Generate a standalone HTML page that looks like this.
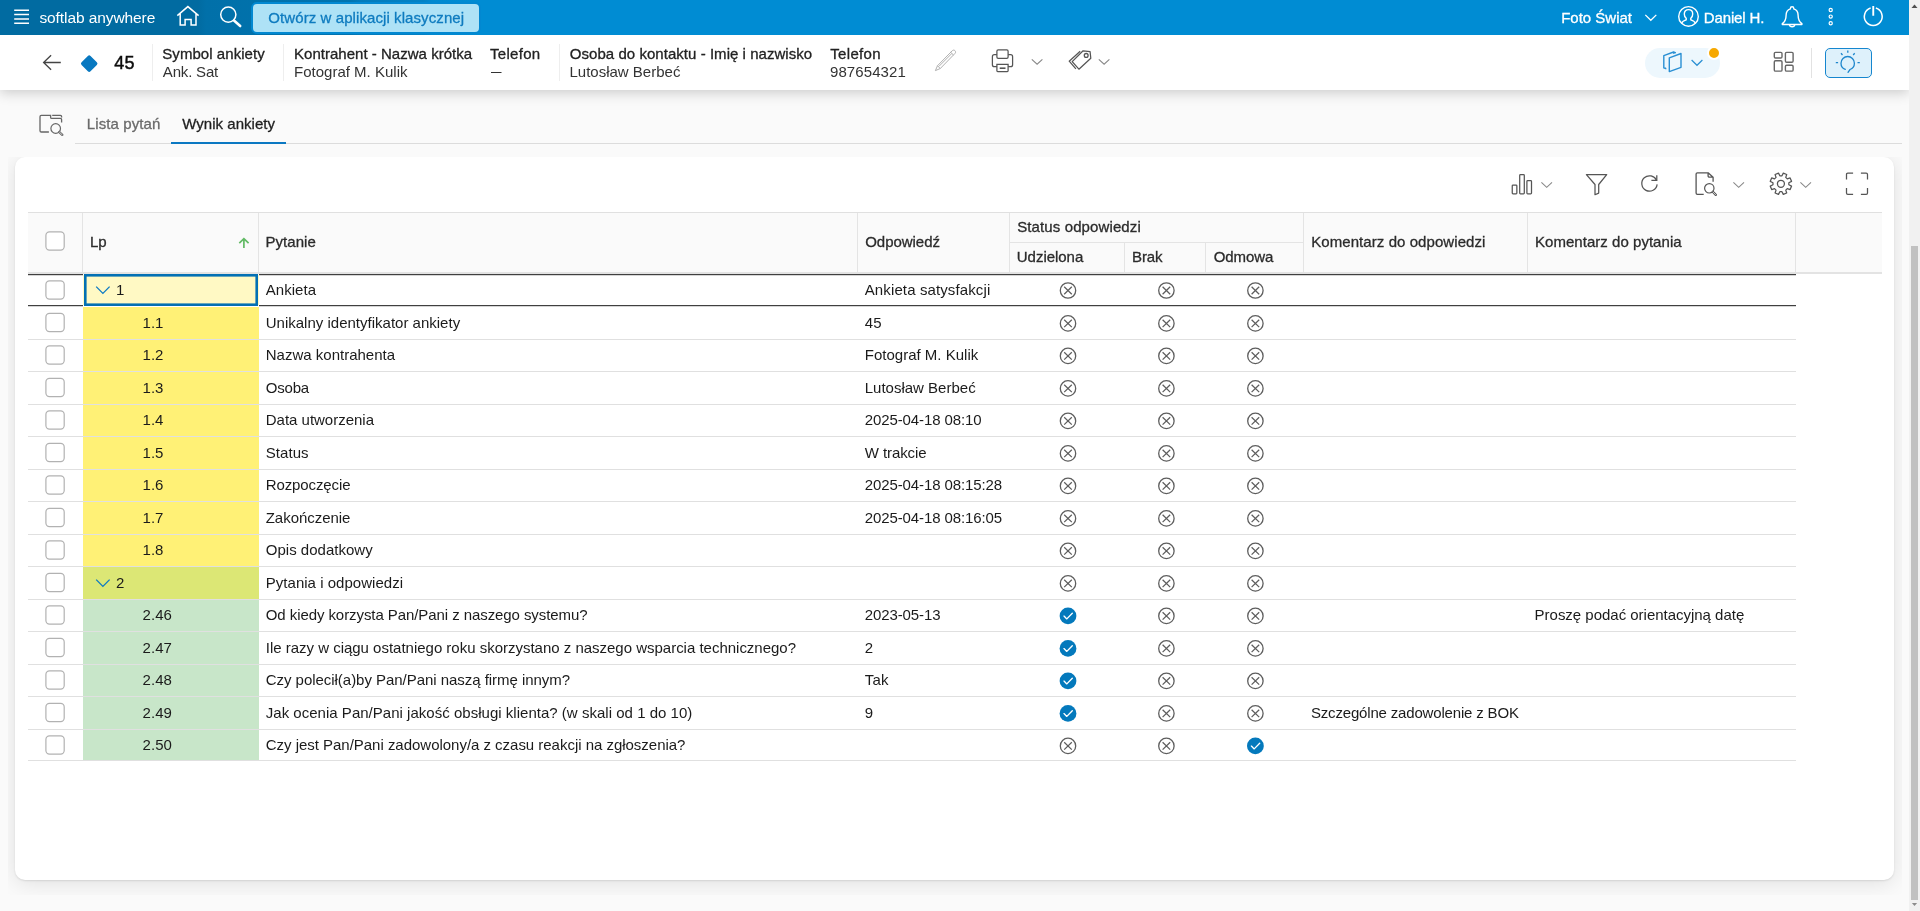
<!DOCTYPE html>
<html lang="pl">
<head>
<meta charset="utf-8">
<title>softlab anywhere - Wynik ankiety</title>
<style>
*{box-sizing:border-box;margin:0;padding:0}
html,body{width:1920px;height:911px;overflow:hidden;background:#fafafa}
body{position:relative;font-family:"Liberation Sans",sans-serif;font-size:15px;color:#212121}
.abs,.t,.ic,.lpbg,.rl,.cb,svg.i{position:absolute}
.t{white-space:pre;line-height:20px;font-weight:400}
#topbar{left:0;top:0;width:1909px;height:35px;background:linear-gradient(90deg,#016ba1 0,#016ba1 198px,#0170a9 206px,#0174af 350px,#027bbb 360px,#0282c5 424px,#0189cf 432px,#008cd3 480px,#008cd3 100%)}
#hdr{left:0;top:35px;width:1909px;height:55px;background:#fff;box-shadow:0 3px 12px rgba(0,0,0,.19);clip-path:inset(0 0 -40px 0)}
#sb{left:1909px;top:0;width:11px;height:911px;background:#f1f1f1}
#thumb{left:1911px;top:246px;width:7px;height:654px;background:#c1c1c1}
#btn{left:251px;top:2px;width:230px;height:32px;border-radius:6px;background:#aee2f6;border:2px solid #0288d1}
.vsep{width:1px;background:#eee;top:44px;height:37px}
#pill{left:1645px;top:48px;width:75px;height:30px;border-radius:15px;background:#edf7fd}
#dot{left:1707px;top:46px;width:14px;height:14px;border-radius:7px;background:#f6a800;border:2px solid #fff}
#bulb{left:1825px;top:48px;width:47px;height:30px;border-radius:5px;background:#def1fb;border:1.3px solid #1586cf}
#tabline{left:75px;top:143px;width:1827px;height:1px;background:#dcdcdc}
#tabsel{left:171px;top:142px;width:115px;height:2px;background:#0b78c2}
#clip{left:8px;top:157px;width:1894px;height:738px;overflow:hidden}
#card{left:7px;top:0;width:1879px;height:723px;background:#fff;border-radius:10px;box-shadow:0 3px 22px rgba(0,0,0,.11),0 1px 2px rgba(0,0,0,.10)}
#thead{left:28px;top:212px;width:1854px;height:62px;background:#fafafa;border-top:1px solid #e0e0e0;border-bottom:2px solid #e3e3e3}
.cs{width:1px;background:#e4e4e4;top:213px;height:59px}
.cs2{top:243px;height:29px}
#hmid{left:1009px;top:242px;width:294px;height:1px;background:#e4e4e4}
.rl{left:28px;width:1768px;height:1px;background:#e0e0e0}
.lpbg{left:83px;width:176px}
.dk{height:2px;background:linear-gradient(#404040 0,#404040 50%,rgba(64,64,64,.22) 50%,rgba(64,64,64,.22) 100%)}
.cb{left:45px;width:20px;height:20px;border:1.2px solid #b4b4b4;border-radius:4px;background:#fff}
#focus{left:84px;top:274px;width:174px;height:32px;border:2px solid #0b6db5;background:#fff9c4}
</style>
</head>
<body>
<!-- top bar -->
<div class="abs" id="topbar"></div>
<svg class="i" style="left:12px;top:6px" width="20" height="22" viewBox="0 0 20 22"><path d="M2.2 4.3h14.8M2.2 8.6h14.8M2.2 12.9h14.8M2.2 17.2h14.8" stroke="#fff" stroke-width="1.5" fill="none"/></svg>
<svg class="i" style="left:174px;top:3px" width="28" height="28" viewBox="0 0 28 28"><path d="M3.3 12.6L13.9 3.6 24.6 12.6M6.2 10.4V22h4.9v-5.6h6V22h4.9V10.4" stroke="#fff" stroke-width="1.5" fill="none" stroke-linejoin="miter"/></svg>
<svg class="i" style="left:216px;top:3px" width="30" height="28" viewBox="0 0 30 28"><circle cx="12.3" cy="11.6" r="7.6" stroke="#fff" stroke-width="1.5" fill="none"/><path d="M18 17.6l6.2 5.4" stroke="#fff" stroke-width="2.6" stroke-linecap="round" fill="none"/></svg>
<div class="abs" id="btn"></div>
<svg class="i" style="left:1642px;top:10px" width="18" height="14" viewBox="0 0 18 14"><path d="M3.3 4.9l5.5 5.4 5.5-5.4" stroke="#fff" stroke-width="1.3" fill="none"/></svg>
<svg class="i" style="left:1676px;top:4px" width="26" height="26" viewBox="0 0 26 26"><circle cx="12.5" cy="12.4" r="9.8" stroke="#fff" stroke-width="1.4" fill="none"/><path d="M5.6 19.4c.6-2.2 2.6-3 4.6-3.6v-1.5c-1.3-1-1.9-2.5-1.9-4.3 0-2.6 1.6-4.4 4.2-4.4s4.2 1.8 4.2 4.4c0 1.8-.6 3.300-1.900 4.300v1.500c2 .6 4 1.400 4.600 3.600" stroke="#fff" stroke-width="1.4" fill="none"/></svg>
<svg class="i" style="left:1778px;top:3px" width="28" height="28" viewBox="0 0 28 28"><path d="M14.100 3.800c1 0 1.700.7 1.700 1.600v.5c2.800.9 4.300 3.300 4.300 6.300 0 4.500 1.300 6.600 3.800 8.400v.9H4.300v-.9c2.500-1.800 3.800-3.900 3.800-8.400 0-3 1.500-5.400 4.300-6.300v-.5c0-.9.700-1.600 1.700-1.600zM11.300 21.500c.2 1.400 1.300 2.300 2.800 2.300s2.600-.9 2.800-2.300" stroke="#fff" stroke-width="1.4" fill="none" stroke-linejoin="round"/></svg>
<svg class="i" style="left:1824px;top:4px" width="14" height="26" viewBox="0 0 14 26"><circle cx="6.700" cy="6" r="1.600" stroke="#fff" stroke-width="1.200" fill="none"/><circle cx="6.700" cy="12.600" r="1.600" stroke="#fff" stroke-width="1.200" fill="none"/><circle cx="6.700" cy="19.300" r="1.600" stroke="#fff" stroke-width="1.200" fill="none"/></svg>
<svg class="i" style="left:1860px;top:3px" width="28" height="28" viewBox="0 0 28 28"><path d="M10.650 4.990A8.900 8.900 0 1 0 15.850 4.990" stroke="#fff" stroke-width="1.500" fill="none"/><path d="M13.250 3V12.750" stroke="#fff" stroke-width="1.900" fill="none"/></svg>

<!-- record header -->
<div class="abs" id="hdr"></div>
<svg class="i" style="left:40px;top:52px" width="24" height="22" viewBox="0 0 24 22"><path d="M20.800 10.500H3.600M11.100 3.200L3.600 10.500l7.500 7.300" stroke="#444" stroke-width="1.300" fill="none"/></svg>
<svg class="i" style="left:79px;top:53px" width="21" height="21" viewBox="0 0 21 21"><rect x="3.850" y="4.250" width="12.700" height="12.700" rx="1.900" transform="rotate(45 10.200 10.600)" fill="#0878c0"/></svg>
<div class="abs vsep" style="left:152px"></div>
<div class="abs vsep" style="left:283px"></div>
<div class="abs vsep" style="left:559px"></div>
<svg class="i" style="left:932px;top:47px" width="27" height="27" viewBox="0 0 27 27"><path d="M20.300 3.700c.8-.8 1.900-.8 2.700 0s.8 1.900 0 2.700L8.300 21.500 3.400 23.600l2.100-4.900zM18.700 5.300l2.800 2.800M5.500 18.700l2.800 2.800M19.800 6.500L7 19.300" stroke="#b0b0b0" stroke-width="1" fill="none" stroke-linejoin="round"/></svg>
<svg class="i" style="left:989px;top:46px" width="28" height="28" viewBox="0 0 28 28"><path d="M7.900 11.100V5.200c0-.8.500-1.300 1.300-1.300h8.600c.8 0 1.300.5 1.300 1.300v5.900c0 .8-.5 1.300-1.300 1.300H9.200c-.8 0-1.300-.5-1.300-1.300z" stroke="#555" stroke-width="1.250" fill="none"/><path d="M7.900 8.700H5.400c-1.200 0-2 .8-2 2v8c0 1.200.8 2 2 2h2.500M19.100 8.700h2.500c1.200 0 2 .8 2 2v8c0 1.200-.8 2-2 2h-2.500" stroke="#555" stroke-width="1.250" fill="none"/><path d="M7.900 18.400h11.200v6.400c0 .5-.300.800-.8.800H8.700c-.5 0-.8-.300-.8-.8z" stroke="#555" stroke-width="1.250" fill="none"/><path d="M10.700 22.200h5.800" stroke="#555" stroke-width="1.600" fill="none"/></svg>
<svg class="i" style="left:1028px;top:55px" width="18" height="14" viewBox="0 0 18 14"><path d="M3.800 4.300l5.300 4.900 5.300-4.900" stroke="#888" stroke-width="1.100" fill="none"/></svg>
<svg class="i" style="left:1066px;top:47px" width="28" height="26" viewBox="0 0 28 26"><path d="M17.100 3.800l7 .9.700 6.600-11.900 10.900-6.700-7.600z" stroke="#555" stroke-width="1.250" fill="none" stroke-linejoin="round"/><circle cx="20.200" cy="8.400" r="1.900" stroke="#555" stroke-width="1.300" fill="none"/><path d="M14.200 4.200L3.200 14.200l6.700 7.600" stroke="#555" stroke-width="1.250" fill="none" stroke-linejoin="round"/></svg>
<svg class="i" style="left:1095px;top:55px" width="18" height="14" viewBox="0 0 18 14"><path d="M3.800 4.300l5.300 4.900 5.300-4.900" stroke="#888" stroke-width="1.100" fill="none"/></svg>
<div class="abs" id="pill"></div>
<svg class="i" style="left:1660px;top:49px" width="25" height="26" viewBox="-0.500 0 25 26"><path d="M8.800 8.800l11.700-4.300v13.800L8.800 22.600z" stroke="#2a8fd3" stroke-width="1.400" fill="none" stroke-linejoin="round"/><path d="M5.900 19.800l-2.600-.9V6.600l9.800-3.600 2.300.8M3.300 18.900l2.200.4M13.100 3l.4 1.900" stroke="#2a8fd3" stroke-width="1.400" fill="none" stroke-linejoin="round"/></svg>
<svg class="i" style="left:1688px;top:56px" width="18" height="14" viewBox="0 0 18 14"><path d="M3.600 4l5.400 5.300 5.400-5.300" stroke="#2a8fd3" stroke-width="1.200" fill="none"/></svg>
<div class="abs" id="dot"></div>
<svg class="i" style="left:1771px;top:49px" width="26" height="26" viewBox="0 0 26 26"><rect x="3.300" y="3.400" width="7.700" height="5.600" rx="1.200" stroke="#666" stroke-width="1.400" fill="none"/><rect x="14.400" y="3.400" width="7.700" height="9.900" rx="1.200" stroke="#666" stroke-width="1.400" fill="none"/><rect x="3.300" y="11.800" width="7.700" height="10.300" rx="1.200" stroke="#666" stroke-width="1.400" fill="none"/><rect x="14.400" y="16.200" width="7.700" height="5.900" rx="1.200" stroke="#666" stroke-width="1.400" fill="none"/></svg>
<div class="abs" style="left:1811px;top:48px;width:1px;height:30px;background:#e2e2e2"></div>
<div class="abs" id="bulb"></div>
<svg class="i" style="left:1833px;top:48px" width="30" height="28" viewBox="0 0 30 28"><path d="M15 24.300l2-2.800c2.600-.9 4.400-3.400 4.400-6.300 0-3.700-3-6.700-6.700-6.700s-6.700 3-6.700 6.700c0 2.900 1.800 5.300 4.300 6.200" stroke="#1d86cc" stroke-width="1.300" fill="none" stroke-linecap="round"/><path d="M14.800 2.600v2.200M8 5.300l1.500 1.700M21.700 5.300l-1.500 1.700M2.800 14.600h2.300M24.500 14.600h2.300" stroke="#1d86cc" stroke-width="1.300" fill="none"/></svg>

<!-- tabs -->
<svg class="i" style="left:30px;top:105px" width="50" height="40" viewBox="0 0 50 40"><path d="M18.900 27H11.300a1.300 1.300 0 0 1-1.300-1.300V11.700a1.300 1.300 0 0 1 1.300-1.300H20.600V12.200a1.200 1.200 0 0 0 1.200 1.200H30.400a1.200 1.200 0 0 1 1.200 1.200V17.600M22.200 10.400H30.400a1.200 1.200 0 0 1 1.200 1.200V12.600" stroke="#666" stroke-width="1.300" fill="none"/><circle cx="25.700" cy="23.500" r="4.800" stroke="#666" stroke-width="1.200" fill="none"/><path d="M29.300 27.100l3 2.800" stroke="#666" stroke-width="2.300" stroke-linecap="round" fill="none"/><path d="M29.500 27.300l2.600 2.400" stroke="#fafafa" stroke-width=".7" stroke-linecap="round" fill="none"/></svg>
<div class="abs" id="tabline"></div>
<div class="abs" id="tabsel"></div>

<!-- card -->
<div class="abs" id="clip"><div class="abs" id="card"></div></div>

<!-- toolbar -->
<svg class="i" style="left:1509px;top:171px" width="26" height="26" viewBox="0 0 26 26"><rect x="3.250" y="14" width="4.600" height="8.750" rx=".8" stroke="#555" stroke-width="1.250" fill="none"/><rect x="10.700" y="3.650" width="4.600" height="19.100" rx=".8" stroke="#555" stroke-width="1.250" fill="none"/><rect x="17.900" y="9.650" width="4.600" height="13.100" rx=".8" stroke="#555" stroke-width="1.250" fill="none"/></svg>
<svg class="i" style="left:1538px;top:178px" width="18" height="14" viewBox="0 0 18 14"><path d="M3.400 4.400l5.300 4.900 5.300-4.900" stroke="#888" stroke-width="1.100" fill="none"/></svg>
<svg class="i" style="left:1583px;top:171px" width="27" height="27" viewBox="0 0 27 27"><path d="M3.400 3.700h20.300l-8 9.800v8.600l-3.700 1.600V13.500z" stroke="#555" stroke-width="1.250" fill="none" stroke-linejoin="round"/></svg>
<svg class="i" style="left:1637px;top:171px" width="26" height="26" viewBox="0 0 26 26"><path d="M20.140 13.440A7.700 7.700 0 1 1 19.600 9.500" stroke="#555" stroke-width="1.250" fill="none"/><path d="M14.400 9.400H19.800V4.200" stroke="#555" stroke-width="1.250" fill="none"/></svg>
<svg class="i" style="left:1693px;top:170px" width="27" height="28" viewBox="0 0 27 28"><path d="M10.700 24.400H4.400a1.300 1.300 0 0 1-1.300-1.300V4.100a1.300 1.300 0 0 1 1.300-1.300H15.100L20.100 7.200V11.700M15.100 2.800V5.900a1.200 1.200 0 0 0 1.200 1.200H20" stroke="#555" stroke-width="1.300" fill="none" stroke-linejoin="round"/><circle cx="16.300" cy="18.300" r="4.700" stroke="#555" stroke-width="1.200" fill="none"/><path d="M19.800 21.800l3 3.100" stroke="#555" stroke-width="2.300" stroke-linecap="round" fill="none"/><path d="M20 22l2.600 2.700" stroke="#fff" stroke-width=".7" stroke-linecap="round" fill="none"/></svg>
<svg class="i" style="left:1730px;top:178px" width="18" height="14" viewBox="0 0 18 14"><path d="M3.400 4.400l5.300 4.900 5.300-4.900" stroke="#888" stroke-width="1.100" fill="none"/></svg>
<svg class="i" style="left:1767px;top:170px" width="28" height="28" viewBox="0 0 28 28"><g transform="translate(13.900 13.750)" stroke="#555" stroke-width="1.250" fill="none" stroke-linejoin="round"><path d="M7.93 1.06 L10.63 2.41 L9.22 5.81 L6.36 4.86 L4.86 6.36 L5.81 9.22 L2.41 10.63 L1.06 7.93 L-1.06 7.93 L-2.41 10.63 L-5.81 9.22 L-4.86 6.36 L-6.36 4.86 L-9.22 5.81 L-10.63 2.41 L-7.93 1.06 L-7.93 -1.06 L-10.63 -2.41 L-9.22 -5.81 L-6.36 -4.86 L-4.86 -6.36 L-5.81 -9.22 L-2.41 -10.63 L-1.06 -7.93 L1.06 -7.93 L2.41 -10.63 L5.81 -9.22 L4.86 -6.36 L6.36 -4.86 L9.22 -5.81 L10.63 -2.41 L7.93 -1.06Z"/><circle r="3.500"/></g></svg>
<svg class="i" style="left:1797px;top:178px" width="18" height="14" viewBox="0 0 18 14"><path d="M3.400 4.400l5.300 4.900 5.300-4.900" stroke="#888" stroke-width="1.100" fill="none"/></svg>
<svg class="i" style="left:1843px;top:170px" width="28" height="28" viewBox="0 0 28 28"><path d="M3.500 9.600V4.500c0-.8.500-1.300 1.300-1.300h5.300M17.900 3.200h5.300c.8 0 1.300.5 1.300 1.300v5.100M24.500 17.900v5.100c0 .8-.5 1.300-1.300 1.300h-5.300M10.100 24.300H4.800c-.8 0-1.300-.5-1.300-1.300v-5.100" stroke="#555" stroke-width="1.250" fill="none"/></svg>

<!-- table -->
<div class="abs" id="thead"></div>
<div class="abs cs" style="left:82px"></div>
<div class="abs cs" style="left:258px"></div>
<div class="abs cs" style="left:857px"></div>
<div class="abs cs" style="left:1009px"></div>
<div class="abs cs cs2" style="left:1124px"></div>
<div class="abs cs cs2" style="left:1205px"></div>
<div class="abs cs" style="left:1303px"></div>
<div class="abs cs" style="left:1527px"></div>
<div class="abs cs" style="left:1795px"></div>
<div class="abs" id="hmid"></div>
<svg class="i" style="left:44px;top:229.85px" width="22" height="22" viewBox="0 0 22 22"><rect x="1.9" y="1.9" width="18.3" height="18.3" rx="3.6" fill="#fff" stroke="#b2b2b2" stroke-width="1.2"/></svg>
<svg class="i" style="left:236px;top:235px" width="16" height="16" viewBox="0 0 16 16"><path d="M7.900 13.100V4M3.300 8.100L7.900 3.700l4.700 4.400" stroke="#62ba65" stroke-width="1.700" fill="none"/></svg>
<div class="lpbg" style="top:275px;height:30px;background:#fff9c4"></div>
<svg class="i" style="left:44px;top:278px" width="23" height="23" viewBox="0 0 23 23"><g transform="translate(0.00 0.90)"><rect x="1.900" y="1.900" width="18.300" height="18.300" rx="3.600" fill="#fff" stroke="#b2b2b2" stroke-width="1.200"/></g></svg>
<div class="lpbg" style="top:307px;height:32px;background:#fff176"></div>
<div class="rl" style="top:339px"></div>
<svg class="i" style="left:44px;top:311px" width="23" height="23" viewBox="0 0 23 23"><g transform="translate(0.00 0.40)"><rect x="1.900" y="1.900" width="18.300" height="18.300" rx="3.600" fill="#fff" stroke="#b2b2b2" stroke-width="1.200"/></g></svg>
<div class="lpbg" style="top:340px;height:31px;background:#fff176"></div>
<div class="rl" style="top:371px"></div>
<svg class="i" style="left:44px;top:343px" width="23" height="23" viewBox="0 0 23 23"><g transform="translate(0.00 0.90)"><rect x="1.900" y="1.900" width="18.300" height="18.300" rx="3.600" fill="#fff" stroke="#b2b2b2" stroke-width="1.200"/></g></svg>
<div class="lpbg" style="top:372px;height:32px;background:#fff176"></div>
<div class="rl" style="top:404px"></div>
<svg class="i" style="left:44px;top:376px" width="23" height="23" viewBox="0 0 23 23"><g transform="translate(0.00 0.40)"><rect x="1.900" y="1.900" width="18.300" height="18.300" rx="3.600" fill="#fff" stroke="#b2b2b2" stroke-width="1.200"/></g></svg>
<div class="lpbg" style="top:405px;height:31px;background:#fff176"></div>
<div class="rl" style="top:436px"></div>
<svg class="i" style="left:44px;top:408px" width="23" height="23" viewBox="0 0 23 23"><g transform="translate(0.00 0.90)"><rect x="1.900" y="1.900" width="18.300" height="18.300" rx="3.600" fill="#fff" stroke="#b2b2b2" stroke-width="1.200"/></g></svg>
<div class="lpbg" style="top:437px;height:32px;background:#fff176"></div>
<div class="rl" style="top:469px"></div>
<svg class="i" style="left:44px;top:441px" width="23" height="23" viewBox="0 0 23 23"><g transform="translate(0.00 0.40)"><rect x="1.900" y="1.900" width="18.300" height="18.300" rx="3.600" fill="#fff" stroke="#b2b2b2" stroke-width="1.200"/></g></svg>
<div class="lpbg" style="top:470px;height:31px;background:#fff176"></div>
<div class="rl" style="top:501px"></div>
<svg class="i" style="left:44px;top:473px" width="23" height="23" viewBox="0 0 23 23"><g transform="translate(0.00 0.90)"><rect x="1.900" y="1.900" width="18.300" height="18.300" rx="3.600" fill="#fff" stroke="#b2b2b2" stroke-width="1.200"/></g></svg>
<div class="lpbg" style="top:502px;height:32px;background:#fff176"></div>
<div class="rl" style="top:534px"></div>
<svg class="i" style="left:44px;top:506px" width="23" height="23" viewBox="0 0 23 23"><g transform="translate(0.00 0.40)"><rect x="1.900" y="1.900" width="18.300" height="18.300" rx="3.600" fill="#fff" stroke="#b2b2b2" stroke-width="1.200"/></g></svg>
<div class="lpbg" style="top:535px;height:31px;background:#fff176"></div>
<div class="rl" style="top:566px"></div>
<svg class="i" style="left:44px;top:538px" width="23" height="23" viewBox="0 0 23 23"><g transform="translate(0.00 0.90)"><rect x="1.900" y="1.900" width="18.300" height="18.300" rx="3.600" fill="#fff" stroke="#b2b2b2" stroke-width="1.200"/></g></svg>
<div class="lpbg" style="top:567px;height:32px;background:#dce775"></div>
<div class="rl" style="top:599px"></div>
<svg class="i" style="left:44px;top:571px" width="23" height="23" viewBox="0 0 23 23"><g transform="translate(0.00 0.40)"><rect x="1.900" y="1.900" width="18.300" height="18.300" rx="3.600" fill="#fff" stroke="#b2b2b2" stroke-width="1.200"/></g></svg>
<div class="lpbg" style="top:600px;height:31px;background:#c8e6c9"></div>
<div class="rl" style="top:631px"></div>
<svg class="i" style="left:44px;top:603px" width="23" height="23" viewBox="0 0 23 23"><g transform="translate(0.00 0.90)"><rect x="1.900" y="1.900" width="18.300" height="18.300" rx="3.600" fill="#fff" stroke="#b2b2b2" stroke-width="1.200"/></g></svg>
<div class="lpbg" style="top:632px;height:32px;background:#c8e6c9"></div>
<div class="rl" style="top:664px"></div>
<svg class="i" style="left:44px;top:636px" width="23" height="23" viewBox="0 0 23 23"><g transform="translate(0.00 0.40)"><rect x="1.900" y="1.900" width="18.300" height="18.300" rx="3.600" fill="#fff" stroke="#b2b2b2" stroke-width="1.200"/></g></svg>
<div class="lpbg" style="top:665px;height:31px;background:#c8e6c9"></div>
<div class="rl" style="top:696px"></div>
<svg class="i" style="left:44px;top:668px" width="23" height="23" viewBox="0 0 23 23"><g transform="translate(0.00 0.90)"><rect x="1.900" y="1.900" width="18.300" height="18.300" rx="3.600" fill="#fff" stroke="#b2b2b2" stroke-width="1.200"/></g></svg>
<div class="lpbg" style="top:697px;height:32px;background:#c8e6c9"></div>
<div class="rl" style="top:729px"></div>
<svg class="i" style="left:44px;top:701px" width="23" height="23" viewBox="0 0 23 23"><g transform="translate(0.00 0.40)"><rect x="1.900" y="1.900" width="18.300" height="18.300" rx="3.600" fill="#fff" stroke="#b2b2b2" stroke-width="1.200"/></g></svg>
<div class="lpbg" style="top:730px;height:31px;background:#c8e6c9"></div>
<div class="rl" style="top:760px"></div>
<svg class="i" style="left:44px;top:733px" width="23" height="23" viewBox="0 0 23 23"><g transform="translate(0.00 0.90)"><rect x="1.900" y="1.900" width="18.300" height="18.300" rx="3.600" fill="#fff" stroke="#b2b2b2" stroke-width="1.200"/></g></svg>
<div class="abs dk" style="top:274px;left:28px;width:55px"></div><div class="abs dk" style="top:274px;left:259px;width:1537px"></div>
<div class="abs dk" style="top:305px;left:28px;width:55px"></div><div class="abs dk" style="top:305px;left:259px;width:1537px"></div>
<svg class="i" style="left:83px;top:273px" width="177" height="34" viewBox="0 0 177 34"><rect x="2.300" y="2.300" width="171.400" height="29.400" fill="#fff9c4" stroke="#0370b4" stroke-width="2.600"/></svg>
<svg class="i" style="left:93px;top:283px" width="20" height="14" viewBox="0 0 20 14"><path d="M3.200 3.600l6.700 6.800 6.700-6.800" stroke="#0b79c4" stroke-width="1.300" fill="none"/></svg>
<svg class="i" style="left:93px;top:576px" width="20" height="14" viewBox="0 0 20 14"><path d="M3.200 3.600l6.700 6.800 6.700-6.800" stroke="#0b79c4" stroke-width="1.300" fill="none"/></svg>
<svg class="i" style="left:1058px;top:280px" width="21" height="21" viewBox="0 0 21 21"><g transform="translate(0.00 0.50)"><circle cx="10" cy="10" r="7.7" fill="none" stroke="#5e5e5e" stroke-width="1.3"/><path d="M6.2 6.300l7.600 7.400M13.800 6.300l-7.600 7.400" stroke="#5e5e5e" stroke-width="1.250" fill="none"/></g></svg>
<svg class="i" style="left:1156px;top:280px" width="21" height="21" viewBox="0 0 21 21"><g transform="translate(0.40 0.50)"><circle cx="10" cy="10" r="7.7" fill="none" stroke="#5e5e5e" stroke-width="1.3"/><path d="M6.2 6.300l7.600 7.400M13.800 6.300l-7.600 7.400" stroke="#5e5e5e" stroke-width="1.250" fill="none"/></g></svg>
<svg class="i" style="left:1245px;top:280px" width="21" height="21" viewBox="0 0 21 21"><g transform="translate(0.40 0.50)"><circle cx="10" cy="10" r="7.7" fill="none" stroke="#5e5e5e" stroke-width="1.3"/><path d="M6.2 6.300l7.600 7.400M13.800 6.300l-7.600 7.400" stroke="#5e5e5e" stroke-width="1.250" fill="none"/></g></svg>
<svg class="i" style="left:1058px;top:313px" width="21" height="21" viewBox="0 0 21 21"><g transform="translate(0.00 0.40)"><circle cx="10" cy="10" r="7.7" fill="none" stroke="#5e5e5e" stroke-width="1.3"/><path d="M6.2 6.300l7.600 7.400M13.800 6.300l-7.600 7.400" stroke="#5e5e5e" stroke-width="1.250" fill="none"/></g></svg>
<svg class="i" style="left:1156px;top:313px" width="21" height="21" viewBox="0 0 21 21"><g transform="translate(0.40 0.40)"><circle cx="10" cy="10" r="7.7" fill="none" stroke="#5e5e5e" stroke-width="1.3"/><path d="M6.2 6.300l7.600 7.400M13.800 6.300l-7.600 7.400" stroke="#5e5e5e" stroke-width="1.250" fill="none"/></g></svg>
<svg class="i" style="left:1245px;top:313px" width="21" height="21" viewBox="0 0 21 21"><g transform="translate(0.40 0.40)"><circle cx="10" cy="10" r="7.7" fill="none" stroke="#5e5e5e" stroke-width="1.3"/><path d="M6.2 6.300l7.600 7.400M13.800 6.300l-7.600 7.400" stroke="#5e5e5e" stroke-width="1.250" fill="none"/></g></svg>
<svg class="i" style="left:1058px;top:345px" width="21" height="21" viewBox="0 0 21 21"><g transform="translate(0.00 0.90)"><circle cx="10" cy="10" r="7.7" fill="none" stroke="#5e5e5e" stroke-width="1.3"/><path d="M6.2 6.300l7.600 7.400M13.800 6.300l-7.600 7.400" stroke="#5e5e5e" stroke-width="1.250" fill="none"/></g></svg>
<svg class="i" style="left:1156px;top:345px" width="21" height="21" viewBox="0 0 21 21"><g transform="translate(0.40 0.90)"><circle cx="10" cy="10" r="7.7" fill="none" stroke="#5e5e5e" stroke-width="1.3"/><path d="M6.2 6.300l7.600 7.400M13.800 6.300l-7.600 7.400" stroke="#5e5e5e" stroke-width="1.250" fill="none"/></g></svg>
<svg class="i" style="left:1245px;top:345px" width="21" height="21" viewBox="0 0 21 21"><g transform="translate(0.40 0.90)"><circle cx="10" cy="10" r="7.7" fill="none" stroke="#5e5e5e" stroke-width="1.3"/><path d="M6.2 6.300l7.600 7.400M13.800 6.300l-7.600 7.400" stroke="#5e5e5e" stroke-width="1.250" fill="none"/></g></svg>
<svg class="i" style="left:1058px;top:378px" width="21" height="21" viewBox="0 0 21 21"><g transform="translate(0.00 0.40)"><circle cx="10" cy="10" r="7.7" fill="none" stroke="#5e5e5e" stroke-width="1.3"/><path d="M6.2 6.300l7.600 7.400M13.800 6.300l-7.600 7.400" stroke="#5e5e5e" stroke-width="1.250" fill="none"/></g></svg>
<svg class="i" style="left:1156px;top:378px" width="21" height="21" viewBox="0 0 21 21"><g transform="translate(0.40 0.40)"><circle cx="10" cy="10" r="7.7" fill="none" stroke="#5e5e5e" stroke-width="1.3"/><path d="M6.2 6.300l7.600 7.400M13.800 6.300l-7.600 7.400" stroke="#5e5e5e" stroke-width="1.250" fill="none"/></g></svg>
<svg class="i" style="left:1245px;top:378px" width="21" height="21" viewBox="0 0 21 21"><g transform="translate(0.40 0.40)"><circle cx="10" cy="10" r="7.7" fill="none" stroke="#5e5e5e" stroke-width="1.3"/><path d="M6.2 6.300l7.600 7.400M13.800 6.300l-7.600 7.400" stroke="#5e5e5e" stroke-width="1.250" fill="none"/></g></svg>
<svg class="i" style="left:1058px;top:410px" width="21" height="21" viewBox="0 0 21 21"><g transform="translate(0.00 0.90)"><circle cx="10" cy="10" r="7.7" fill="none" stroke="#5e5e5e" stroke-width="1.3"/><path d="M6.2 6.300l7.600 7.400M13.800 6.300l-7.600 7.400" stroke="#5e5e5e" stroke-width="1.250" fill="none"/></g></svg>
<svg class="i" style="left:1156px;top:410px" width="21" height="21" viewBox="0 0 21 21"><g transform="translate(0.40 0.90)"><circle cx="10" cy="10" r="7.7" fill="none" stroke="#5e5e5e" stroke-width="1.3"/><path d="M6.2 6.300l7.600 7.400M13.800 6.300l-7.600 7.400" stroke="#5e5e5e" stroke-width="1.250" fill="none"/></g></svg>
<svg class="i" style="left:1245px;top:410px" width="21" height="21" viewBox="0 0 21 21"><g transform="translate(0.40 0.90)"><circle cx="10" cy="10" r="7.7" fill="none" stroke="#5e5e5e" stroke-width="1.3"/><path d="M6.2 6.300l7.600 7.400M13.800 6.300l-7.600 7.400" stroke="#5e5e5e" stroke-width="1.250" fill="none"/></g></svg>
<svg class="i" style="left:1058px;top:443px" width="21" height="21" viewBox="0 0 21 21"><g transform="translate(0.00 0.40)"><circle cx="10" cy="10" r="7.7" fill="none" stroke="#5e5e5e" stroke-width="1.3"/><path d="M6.2 6.300l7.600 7.400M13.800 6.300l-7.600 7.400" stroke="#5e5e5e" stroke-width="1.250" fill="none"/></g></svg>
<svg class="i" style="left:1156px;top:443px" width="21" height="21" viewBox="0 0 21 21"><g transform="translate(0.40 0.40)"><circle cx="10" cy="10" r="7.7" fill="none" stroke="#5e5e5e" stroke-width="1.3"/><path d="M6.2 6.300l7.600 7.400M13.800 6.300l-7.600 7.400" stroke="#5e5e5e" stroke-width="1.250" fill="none"/></g></svg>
<svg class="i" style="left:1245px;top:443px" width="21" height="21" viewBox="0 0 21 21"><g transform="translate(0.40 0.40)"><circle cx="10" cy="10" r="7.7" fill="none" stroke="#5e5e5e" stroke-width="1.3"/><path d="M6.2 6.300l7.600 7.400M13.800 6.300l-7.600 7.400" stroke="#5e5e5e" stroke-width="1.250" fill="none"/></g></svg>
<svg class="i" style="left:1058px;top:475px" width="21" height="21" viewBox="0 0 21 21"><g transform="translate(0.00 0.90)"><circle cx="10" cy="10" r="7.7" fill="none" stroke="#5e5e5e" stroke-width="1.3"/><path d="M6.2 6.300l7.600 7.400M13.800 6.300l-7.600 7.400" stroke="#5e5e5e" stroke-width="1.250" fill="none"/></g></svg>
<svg class="i" style="left:1156px;top:475px" width="21" height="21" viewBox="0 0 21 21"><g transform="translate(0.40 0.90)"><circle cx="10" cy="10" r="7.7" fill="none" stroke="#5e5e5e" stroke-width="1.3"/><path d="M6.2 6.300l7.600 7.400M13.800 6.300l-7.600 7.400" stroke="#5e5e5e" stroke-width="1.250" fill="none"/></g></svg>
<svg class="i" style="left:1245px;top:475px" width="21" height="21" viewBox="0 0 21 21"><g transform="translate(0.40 0.90)"><circle cx="10" cy="10" r="7.7" fill="none" stroke="#5e5e5e" stroke-width="1.3"/><path d="M6.2 6.300l7.600 7.400M13.800 6.300l-7.600 7.400" stroke="#5e5e5e" stroke-width="1.250" fill="none"/></g></svg>
<svg class="i" style="left:1058px;top:508px" width="21" height="21" viewBox="0 0 21 21"><g transform="translate(0.00 0.40)"><circle cx="10" cy="10" r="7.7" fill="none" stroke="#5e5e5e" stroke-width="1.3"/><path d="M6.2 6.300l7.600 7.400M13.800 6.300l-7.600 7.400" stroke="#5e5e5e" stroke-width="1.250" fill="none"/></g></svg>
<svg class="i" style="left:1156px;top:508px" width="21" height="21" viewBox="0 0 21 21"><g transform="translate(0.40 0.40)"><circle cx="10" cy="10" r="7.7" fill="none" stroke="#5e5e5e" stroke-width="1.3"/><path d="M6.2 6.300l7.600 7.400M13.800 6.300l-7.600 7.400" stroke="#5e5e5e" stroke-width="1.250" fill="none"/></g></svg>
<svg class="i" style="left:1245px;top:508px" width="21" height="21" viewBox="0 0 21 21"><g transform="translate(0.40 0.40)"><circle cx="10" cy="10" r="7.7" fill="none" stroke="#5e5e5e" stroke-width="1.3"/><path d="M6.2 6.300l7.600 7.400M13.800 6.300l-7.600 7.400" stroke="#5e5e5e" stroke-width="1.250" fill="none"/></g></svg>
<svg class="i" style="left:1058px;top:540px" width="21" height="21" viewBox="0 0 21 21"><g transform="translate(0.00 0.90)"><circle cx="10" cy="10" r="7.7" fill="none" stroke="#5e5e5e" stroke-width="1.3"/><path d="M6.2 6.300l7.600 7.400M13.800 6.300l-7.600 7.400" stroke="#5e5e5e" stroke-width="1.250" fill="none"/></g></svg>
<svg class="i" style="left:1156px;top:540px" width="21" height="21" viewBox="0 0 21 21"><g transform="translate(0.40 0.90)"><circle cx="10" cy="10" r="7.7" fill="none" stroke="#5e5e5e" stroke-width="1.3"/><path d="M6.2 6.300l7.600 7.400M13.800 6.300l-7.600 7.400" stroke="#5e5e5e" stroke-width="1.250" fill="none"/></g></svg>
<svg class="i" style="left:1245px;top:540px" width="21" height="21" viewBox="0 0 21 21"><g transform="translate(0.40 0.90)"><circle cx="10" cy="10" r="7.7" fill="none" stroke="#5e5e5e" stroke-width="1.3"/><path d="M6.2 6.300l7.600 7.400M13.800 6.300l-7.600 7.400" stroke="#5e5e5e" stroke-width="1.250" fill="none"/></g></svg>
<svg class="i" style="left:1058px;top:573px" width="21" height="21" viewBox="0 0 21 21"><g transform="translate(0.00 0.40)"><circle cx="10" cy="10" r="7.7" fill="none" stroke="#5e5e5e" stroke-width="1.3"/><path d="M6.2 6.300l7.600 7.400M13.800 6.300l-7.600 7.400" stroke="#5e5e5e" stroke-width="1.250" fill="none"/></g></svg>
<svg class="i" style="left:1156px;top:573px" width="21" height="21" viewBox="0 0 21 21"><g transform="translate(0.40 0.40)"><circle cx="10" cy="10" r="7.7" fill="none" stroke="#5e5e5e" stroke-width="1.3"/><path d="M6.2 6.300l7.600 7.400M13.800 6.300l-7.600 7.400" stroke="#5e5e5e" stroke-width="1.250" fill="none"/></g></svg>
<svg class="i" style="left:1245px;top:573px" width="21" height="21" viewBox="0 0 21 21"><g transform="translate(0.40 0.40)"><circle cx="10" cy="10" r="7.7" fill="none" stroke="#5e5e5e" stroke-width="1.3"/><path d="M6.2 6.300l7.600 7.400M13.800 6.300l-7.600 7.400" stroke="#5e5e5e" stroke-width="1.250" fill="none"/></g></svg>
<svg class="i" style="left:1058px;top:605px" width="21" height="21" viewBox="0 0 21 21"><g transform="translate(0.00 0.90)"><circle cx="10" cy="10" r="8.400" fill="#0479bc"/><path d="M6 10.200l2.800 2.800 5.500-5.600" stroke="#fff" stroke-width="1.350" fill="none" stroke-linecap="round" stroke-linejoin="round"/></g></svg>
<svg class="i" style="left:1156px;top:605px" width="21" height="21" viewBox="0 0 21 21"><g transform="translate(0.40 0.90)"><circle cx="10" cy="10" r="7.7" fill="none" stroke="#5e5e5e" stroke-width="1.3"/><path d="M6.2 6.300l7.600 7.400M13.800 6.300l-7.600 7.400" stroke="#5e5e5e" stroke-width="1.250" fill="none"/></g></svg>
<svg class="i" style="left:1245px;top:605px" width="21" height="21" viewBox="0 0 21 21"><g transform="translate(0.40 0.90)"><circle cx="10" cy="10" r="7.7" fill="none" stroke="#5e5e5e" stroke-width="1.3"/><path d="M6.2 6.300l7.600 7.400M13.800 6.300l-7.600 7.400" stroke="#5e5e5e" stroke-width="1.250" fill="none"/></g></svg>
<svg class="i" style="left:1058px;top:638px" width="21" height="21" viewBox="0 0 21 21"><g transform="translate(0.00 0.40)"><circle cx="10" cy="10" r="8.400" fill="#0479bc"/><path d="M6 10.200l2.800 2.800 5.500-5.600" stroke="#fff" stroke-width="1.350" fill="none" stroke-linecap="round" stroke-linejoin="round"/></g></svg>
<svg class="i" style="left:1156px;top:638px" width="21" height="21" viewBox="0 0 21 21"><g transform="translate(0.40 0.40)"><circle cx="10" cy="10" r="7.7" fill="none" stroke="#5e5e5e" stroke-width="1.3"/><path d="M6.2 6.300l7.600 7.400M13.800 6.300l-7.600 7.400" stroke="#5e5e5e" stroke-width="1.250" fill="none"/></g></svg>
<svg class="i" style="left:1245px;top:638px" width="21" height="21" viewBox="0 0 21 21"><g transform="translate(0.40 0.40)"><circle cx="10" cy="10" r="7.7" fill="none" stroke="#5e5e5e" stroke-width="1.3"/><path d="M6.2 6.300l7.600 7.400M13.800 6.300l-7.600 7.400" stroke="#5e5e5e" stroke-width="1.250" fill="none"/></g></svg>
<svg class="i" style="left:1058px;top:670px" width="21" height="21" viewBox="0 0 21 21"><g transform="translate(0.00 0.90)"><circle cx="10" cy="10" r="8.400" fill="#0479bc"/><path d="M6 10.200l2.800 2.800 5.500-5.600" stroke="#fff" stroke-width="1.350" fill="none" stroke-linecap="round" stroke-linejoin="round"/></g></svg>
<svg class="i" style="left:1156px;top:670px" width="21" height="21" viewBox="0 0 21 21"><g transform="translate(0.40 0.90)"><circle cx="10" cy="10" r="7.7" fill="none" stroke="#5e5e5e" stroke-width="1.3"/><path d="M6.2 6.300l7.600 7.400M13.800 6.300l-7.600 7.400" stroke="#5e5e5e" stroke-width="1.250" fill="none"/></g></svg>
<svg class="i" style="left:1245px;top:670px" width="21" height="21" viewBox="0 0 21 21"><g transform="translate(0.40 0.90)"><circle cx="10" cy="10" r="7.7" fill="none" stroke="#5e5e5e" stroke-width="1.3"/><path d="M6.2 6.300l7.600 7.400M13.800 6.300l-7.600 7.400" stroke="#5e5e5e" stroke-width="1.250" fill="none"/></g></svg>
<svg class="i" style="left:1058px;top:703px" width="21" height="21" viewBox="0 0 21 21"><g transform="translate(0.00 0.40)"><circle cx="10" cy="10" r="8.400" fill="#0479bc"/><path d="M6 10.200l2.800 2.800 5.500-5.600" stroke="#fff" stroke-width="1.350" fill="none" stroke-linecap="round" stroke-linejoin="round"/></g></svg>
<svg class="i" style="left:1156px;top:703px" width="21" height="21" viewBox="0 0 21 21"><g transform="translate(0.40 0.40)"><circle cx="10" cy="10" r="7.7" fill="none" stroke="#5e5e5e" stroke-width="1.3"/><path d="M6.2 6.300l7.600 7.400M13.800 6.300l-7.600 7.400" stroke="#5e5e5e" stroke-width="1.250" fill="none"/></g></svg>
<svg class="i" style="left:1245px;top:703px" width="21" height="21" viewBox="0 0 21 21"><g transform="translate(0.40 0.40)"><circle cx="10" cy="10" r="7.7" fill="none" stroke="#5e5e5e" stroke-width="1.3"/><path d="M6.2 6.300l7.600 7.400M13.800 6.300l-7.600 7.400" stroke="#5e5e5e" stroke-width="1.250" fill="none"/></g></svg>
<svg class="i" style="left:1058px;top:735px" width="21" height="21" viewBox="0 0 21 21"><g transform="translate(0.00 0.90)"><circle cx="10" cy="10" r="7.7" fill="none" stroke="#5e5e5e" stroke-width="1.3"/><path d="M6.2 6.300l7.600 7.400M13.800 6.300l-7.600 7.400" stroke="#5e5e5e" stroke-width="1.250" fill="none"/></g></svg>
<svg class="i" style="left:1156px;top:735px" width="21" height="21" viewBox="0 0 21 21"><g transform="translate(0.40 0.90)"><circle cx="10" cy="10" r="7.7" fill="none" stroke="#5e5e5e" stroke-width="1.3"/><path d="M6.2 6.300l7.600 7.400M13.800 6.300l-7.600 7.400" stroke="#5e5e5e" stroke-width="1.250" fill="none"/></g></svg>
<svg class="i" style="left:1245px;top:735px" width="21" height="21" viewBox="0 0 21 21"><g transform="translate(0.40 0.90)"><circle cx="10" cy="10" r="8.400" fill="#0479bc"/><path d="M6 10.200l2.800 2.800 5.500-5.600" stroke="#fff" stroke-width="1.350" fill="none" stroke-linecap="round" stroke-linejoin="round"/></g></svg>
<div id="txt" style="position:absolute;left:0;top:0;width:1909px;height:911px;will-change:transform">
<span class="t" style="left:39.40px;top:8.00px;font-size:15.5px;color:#fff;letter-spacing:-0.087px;">softlab anywhere</span>
<span class="t" style="left:268.30px;top:8.00px;font-size:15px;color:#0e7bbf;letter-spacing:0.085px;-webkit-text-stroke:.3px #0e7bbf;">Otwórz w aplikacji klasycznej</span>
<span class="t" style="left:1561.20px;top:8.00px;font-size:15px;color:#fff;letter-spacing:-0.006px;-webkit-text-stroke:.3px #fff;">Foto Świat</span>
<span class="t" style="left:1703.80px;top:8.00px;font-size:15px;color:#fff;letter-spacing:-0.139px;-webkit-text-stroke:.3px #fff;">Daniel H.</span>
<span class="t" style="left:114.20px;top:53.00px;font-size:18px;color:#0d0d0d;letter-spacing:0.219px;-webkit-text-stroke:.3px #0d0d0d;-webkit-text-stroke:.45px #0d0d0d;">45</span>
<span class="t" style="left:162.30px;top:44.00px;font-size:15px;color:#222;letter-spacing:0.052px;-webkit-text-stroke:.3px #222;">Symbol ankiety</span>
<span class="t" style="left:162.80px;top:62.00px;font-size:15px;color:#333;letter-spacing:-0.172px;">Ank. Sat</span>
<span class="t" style="left:294.00px;top:44.00px;font-size:15px;color:#222;letter-spacing:0.021px;-webkit-text-stroke:.3px #222;">Kontrahent - Nazwa krótka</span>
<span class="t" style="left:294.00px;top:62.00px;font-size:15px;color:#333;letter-spacing:0.007px;">Fotograf M. Kulik</span>
<span class="t" style="left:490.00px;top:44.00px;font-size:15px;color:#222;letter-spacing:0.304px;-webkit-text-stroke:.3px #222;">Telefon</span>
<span class="t" style="left:490.50px;top:61.00px;font-size:15px;color:#333;letter-spacing:-0.600px;transform:scaleX(.7);transform-origin:0 0;">—</span>
<span class="t" style="left:569.80px;top:44.00px;font-size:15px;color:#222;letter-spacing:0.042px;-webkit-text-stroke:.3px #222;">Osoba do kontaktu - Imię i nazwisko</span>
<span class="t" style="left:569.50px;top:62.00px;font-size:15px;color:#333;letter-spacing:0.000px;">Lutosław Berbeć</span>
<span class="t" style="left:830.30px;top:44.00px;font-size:15px;color:#222;letter-spacing:0.304px;-webkit-text-stroke:.3px #222;">Telefon</span>
<span class="t" style="left:830.00px;top:62.00px;font-size:15px;color:#333;letter-spacing:0.087px;">987654321</span>
<span class="t" style="left:86.80px;top:114.00px;font-size:15px;color:#6a6a6a;letter-spacing:0.095px;-webkit-text-stroke:.3px #6a6a6a;">Lista pytań</span>
<span class="t" style="left:182.30px;top:114.00px;font-size:15px;color:#1f1f1f;letter-spacing:0.025px;-webkit-text-stroke:.3px #1f1f1f;">Wynik ankiety</span>
<span class="t" style="left:89.90px;top:232.00px;font-size:15px;color:#2b2b2b;letter-spacing:-0.078px;-webkit-text-stroke:.3px #2b2b2b;">Lp</span>
<span class="t" style="left:265.50px;top:232.00px;font-size:15px;color:#2b2b2b;letter-spacing:0.040px;-webkit-text-stroke:.3px #2b2b2b;">Pytanie</span>
<span class="t" style="left:865.20px;top:232.00px;font-size:15px;color:#2b2b2b;letter-spacing:-0.036px;-webkit-text-stroke:.3px #2b2b2b;">Odpowiedź</span>
<span class="t" style="left:1017.20px;top:217.00px;font-size:15px;color:#2b2b2b;letter-spacing:0.113px;-webkit-text-stroke:.3px #2b2b2b;">Status odpowiedzi</span>
<span class="t" style="left:1016.80px;top:247.00px;font-size:15px;color:#2b2b2b;letter-spacing:-0.030px;-webkit-text-stroke:.3px #2b2b2b;">Udzielona</span>
<span class="t" style="left:1132.00px;top:247.00px;font-size:15px;color:#2b2b2b;letter-spacing:-0.105px;-webkit-text-stroke:.3px #2b2b2b;">Brak</span>
<span class="t" style="left:1213.70px;top:247.00px;font-size:15px;color:#2b2b2b;letter-spacing:-0.073px;-webkit-text-stroke:.3px #2b2b2b;">Odmowa</span>
<span class="t" style="left:1311.20px;top:232.00px;font-size:15px;color:#2b2b2b;letter-spacing:0.074px;-webkit-text-stroke:.3px #2b2b2b;">Komentarz do odpowiedzi</span>
<span class="t" style="left:1535.00px;top:232.00px;font-size:15px;color:#2b2b2b;letter-spacing:0.035px;-webkit-text-stroke:.3px #2b2b2b;">Komentarz do pytania</span>
<span class="t" style="left:116.00px;top:280.00px;font-size:15px;color:#1b1b1b;letter-spacing:0.094px;">1</span>
<span class="t" style="left:265.75px;top:280.00px;font-size:15px;color:#1b1b1b;letter-spacing:0.042px;">Ankieta</span>
<span class="t" style="left:864.75px;top:280.00px;font-size:15px;color:#1b1b1b;letter-spacing:0.118px;">Ankieta satysfakcji</span>
<span class="t" style="left:142.60px;top:313.00px;font-size:15px;color:#1b1b1b;letter-spacing:-0.010px;">1.1</span>
<span class="t" style="left:265.75px;top:313.00px;font-size:15px;color:#1b1b1b;letter-spacing:0.004px;">Unikalny identyfikator ankiety</span>
<span class="t" style="left:864.75px;top:313.00px;font-size:15px;color:#1b1b1b;letter-spacing:0.094px;">45</span>
<span class="t" style="left:142.60px;top:345.00px;font-size:15px;color:#1b1b1b;letter-spacing:-0.010px;">1.2</span>
<span class="t" style="left:265.75px;top:345.00px;font-size:15px;color:#1b1b1b;letter-spacing:0.005px;">Nazwa kontrahenta</span>
<span class="t" style="left:864.75px;top:345.00px;font-size:15px;color:#1b1b1b;letter-spacing:0.007px;">Fotograf M. Kulik</span>
<span class="t" style="left:142.60px;top:378.00px;font-size:15px;color:#1b1b1b;letter-spacing:-0.010px;">1.3</span>
<span class="t" style="left:265.75px;top:378.00px;font-size:15px;color:#1b1b1b;letter-spacing:-0.200px;">Osoba</span>
<span class="t" style="left:864.75px;top:378.00px;font-size:15px;color:#1b1b1b;letter-spacing:0.000px;">Lutosław Berbeć</span>
<span class="t" style="left:142.60px;top:410.00px;font-size:15px;color:#1b1b1b;letter-spacing:-0.010px;">1.4</span>
<span class="t" style="left:265.75px;top:410.00px;font-size:15px;color:#1b1b1b;letter-spacing:-0.010px;">Data utworzenia</span>
<span class="t" style="left:864.75px;top:410.00px;font-size:15px;color:#1b1b1b;letter-spacing:-0.102px;">2025-04-18 08:10</span>
<span class="t" style="left:142.60px;top:443.00px;font-size:15px;color:#1b1b1b;letter-spacing:-0.010px;">1.5</span>
<span class="t" style="left:265.75px;top:443.00px;font-size:15px;color:#1b1b1b;letter-spacing:0.060px;">Status</span>
<span class="t" style="left:864.75px;top:443.00px;font-size:15px;color:#1b1b1b;letter-spacing:-0.080px;">W trakcie</span>
<span class="t" style="left:142.60px;top:475.00px;font-size:15px;color:#1b1b1b;letter-spacing:-0.010px;">1.6</span>
<span class="t" style="left:265.75px;top:475.00px;font-size:15px;color:#1b1b1b;letter-spacing:-0.109px;">Rozpoczęcie</span>
<span class="t" style="left:864.75px;top:475.00px;font-size:15px;color:#1b1b1b;letter-spacing:-0.104px;">2025-04-18 08:15:28</span>
<span class="t" style="left:142.60px;top:508.00px;font-size:15px;color:#1b1b1b;letter-spacing:-0.010px;">1.7</span>
<span class="t" style="left:265.75px;top:508.00px;font-size:15px;color:#1b1b1b;letter-spacing:-0.041px;">Zakończenie</span>
<span class="t" style="left:864.75px;top:508.00px;font-size:15px;color:#1b1b1b;letter-spacing:-0.104px;">2025-04-18 08:16:05</span>
<span class="t" style="left:142.60px;top:540.00px;font-size:15px;color:#1b1b1b;letter-spacing:-0.010px;">1.8</span>
<span class="t" style="left:265.75px;top:540.00px;font-size:15px;color:#1b1b1b;letter-spacing:0.013px;">Opis dodatkowy</span>
<span class="t" style="left:116.00px;top:573.00px;font-size:15px;color:#1b1b1b;letter-spacing:0.094px;">2</span>
<span class="t" style="left:265.75px;top:573.00px;font-size:15px;color:#1b1b1b;letter-spacing:0.029px;">Pytania i odpowiedzi</span>
<span class="t" style="left:142.60px;top:605.00px;font-size:15px;color:#1b1b1b;letter-spacing:0.012px;">2.46</span>
<span class="t" style="left:265.75px;top:605.00px;font-size:15px;color:#1b1b1b;letter-spacing:-0.075px;">Od kiedy korzysta Pan/Pani z naszego systemu?</span>
<span class="t" style="left:864.75px;top:605.00px;font-size:15px;color:#1b1b1b;letter-spacing:-0.100px;">2023-05-13</span>
<span class="t" style="left:1534.60px;top:605.00px;font-size:15px;color:#1b1b1b;letter-spacing:-0.017px;">Proszę podać orientacyjną datę</span>
<span class="t" style="left:142.60px;top:638.00px;font-size:15px;color:#1b1b1b;letter-spacing:0.012px;">2.47</span>
<span class="t" style="left:265.75px;top:638.00px;font-size:15px;color:#1b1b1b;letter-spacing:-0.011px;">Ile razy w ciągu ostatniego roku skorzystano z naszego wsparcia technicznego?</span>
<span class="t" style="left:864.75px;top:638.00px;font-size:15px;color:#1b1b1b;letter-spacing:0.094px;">2</span>
<span class="t" style="left:142.60px;top:670.00px;font-size:15px;color:#1b1b1b;letter-spacing:0.012px;">2.48</span>
<span class="t" style="left:265.75px;top:670.00px;font-size:15px;color:#1b1b1b;letter-spacing:-0.037px;">Czy polecił(a)by Pan/Pani naszą firmę innym?</span>
<span class="t" style="left:864.75px;top:670.00px;font-size:15px;color:#1b1b1b;letter-spacing:0.182px;">Tak</span>
<span class="t" style="left:142.60px;top:703.00px;font-size:15px;color:#1b1b1b;letter-spacing:0.012px;">2.49</span>
<span class="t" style="left:265.75px;top:703.00px;font-size:15px;color:#1b1b1b;letter-spacing:0.021px;">Jak ocenia Pan/Pani jakość obsługi klienta? (w skali od 1 do 10)</span>
<span class="t" style="left:864.75px;top:703.00px;font-size:15px;color:#1b1b1b;letter-spacing:0.094px;">9</span>
<span class="t" style="left:1310.90px;top:703.00px;font-size:15px;color:#1b1b1b;letter-spacing:-0.171px;">Szczególne zadowolenie z BOK</span>
<span class="t" style="left:142.60px;top:735.00px;font-size:15px;color:#1b1b1b;letter-spacing:0.012px;">2.50</span>
<span class="t" style="left:265.75px;top:735.00px;font-size:15px;color:#1b1b1b;letter-spacing:-0.023px;">Czy jest Pan/Pani zadowolony/a z czasu reakcji na zgłoszenia?</span>
</div>
<!-- scrollbar -->
<div class="abs" id="sb"></div>
<div class="abs" id="thumb"></div>
<svg class="i" style="left:1909px;top:0" width="11" height="12" viewBox="0 0 11 12"><path d="M2.500 8l3-3.500 3 3.500z" fill="#505050"/></svg>
<svg class="i" style="left:1909px;top:899px" width="11" height="12" viewBox="0 0 11 12"><path d="M2.900 4.100h5.200l-2.600 3z" fill="#8c8c8c"/></svg>
</body>
</html>
